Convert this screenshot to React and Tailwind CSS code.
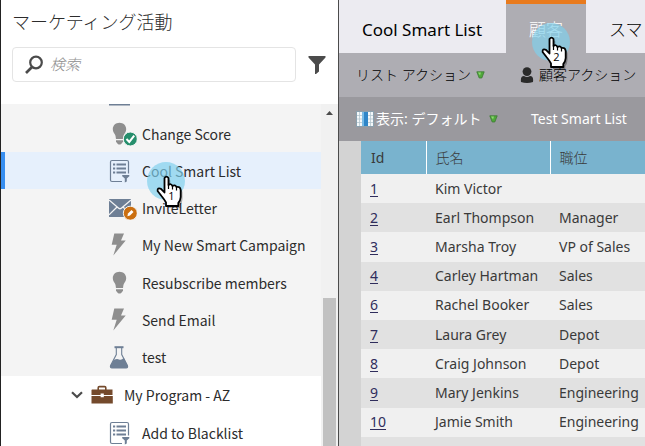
import React from "react";

const JP_SANS = "font-['Noto_Sans','Noto_Sans_CJK_JP',sans-serif]";

function SearchIcon() {
  return (
    <svg width="20" height="20" viewBox="0 0 20 20" fill="none" stroke="#4b4b4b" aria-hidden="true">
      <circle cx="12" cy="7.5" r="5.8" strokeWidth="2.2" />
      <path d="M8 12 L2 18" strokeWidth="2.6" />
    </svg>
  );
}

function FilterIcon() {
  return (
    <svg width="18" height="20" viewBox="0 0 18 20" fill="#4b4b4b" aria-hidden="true">
      <path d="M.5 1 H17.5 V2.5 L11 9.5 V16.5 L8 19 H7 V9.5 L.5 2.5Z" />
    </svg>
  );
}

function BulbShape() {
  return (
    <g fill="#8e8e8e">
      <path d="M10.5 .8 C6.6 .8 3.8 3.6 3.8 7.2 C3.8 9.9 5.4 11.4 6.2 13 C6.8 14.2 6.7 15.8 7 17 H14 C14.3 15.8 14.2 14.2 14.8 13 C15.6 11.4 17.2 9.9 17.2 7.2 C17.2 3.6 14.4 .8 10.5 .8Z" />
      <path d="M7 18.2 H14 V19.8 L12.2 22 Q10.5 23.2 8.8 22 L7 19.8Z" />
    </g>
  );
}

const shapes = {
  bulb: <BulbShape />,
  bulbActive: (
    <>
      <BulbShape />
      <circle cx="21.3" cy="17" r="7" fill="#268e6c" stroke="#f4f4f4" strokeWidth="1" />
      <path d="M17.5 17 L20.3 19.9 L25.2 13.6" fill="none" stroke="#fff" strokeWidth="2" />
    </>
  ),
  list: (
    <>
      <path d="M13 22.5 H3 Q1.5 22.5 1.5 21 V3 Q1.5 1.5 3 1.5 H18 Q19.5 1.5 19.5 3 V14.5" fill="none" stroke="#6e7f95" strokeWidth="1.2" />
      <path d="M4 5.5 H6.2 M4 9.5 H6.2 M4 13.5 H6.2 M7.5 5.5 H17 M7.5 9.5 H17 M7.5 13.5 H17" stroke="#6e7f95" strokeWidth="1.8" />
      <path d="M13.2 16 H20.3 V17.2 L17.8 19.6 V22.5 L15.8 23.6 V19.6 L13.2 17.2Z" fill="#6e7f95" />
    </>
  ),
  mail: (
    <>
      <rect x="0" y="3" width="22" height="18" fill="#6e7f95" />
      <path d="M0 4 L10 12.4 Q11 13.1 12 12.4 L22 4 M0 18.8 L7.8 11.2 M14.2 11.2 L22 18.8" fill="none" stroke="#f4f4f4" strokeWidth="1.3" />
      <circle cx="21.3" cy="17.2" r="7" fill="#cb6f10" stroke="#f4f4f4" strokeWidth="1" />
      <path d="M18.4 20.2 L19 17.6 L22.5 14.1 L24.5 16 L21 19.6Z" fill="#fff" />
    </>
  ),
  bolt: <path d="M5.3 .5 H15 L12 7.5 H16.7 L4.3 22.4 L7.7 11.8 H2.7Z" fill="#8e8e8e" />,
  flask: (
    <>
      <path d="M5.5 2.2 H14.5" stroke="#6e7f95" strokeWidth="2" />
      <path d="M7.3 3 V9.5 L1.6 20.5 Q.8 22.9 3 22.9 H17.2 Q19.2 22.9 18.4 20.5 L12.7 9.5 V3" fill="none" stroke="#6e7f95" strokeWidth="1.1" />
      <path d="M4.6 15 Q8 13.2 10 14.4 Q12.5 15.6 14.8 12.8 L18.6 20.5 Q19.4 23 17 23 H3 Q.6 23 1.4 20.5Z" fill="#6e7f95" />
    </>
  ),
  sheet: <path d="M0 20 H21 V22.5 H0Z" fill="#6e7f95" />,
  briefcase: (
    <>
      <path d="M7.2 7 V4.8 Q7.2 3.6 8.4 3.6 H13.6 Q14.8 3.6 14.8 4.8 V7" fill="none" stroke="#744a2c" strokeWidth="1.6" />
      <path d="M1 6.5 H21.5 V12 H12.8 V10.6 H9.6 V12 H.5 V7Z M.5 13 H9.6 V14.2 H12.8 V13 H21.8 V20.5 H.5Z" fill="#744a2c" />
    </>
  ),
};

function TreeIcon({ name }) {
  return (
    <svg className="shrink-0" width="28" height="24" viewBox="0 0 28 24" aria-hidden="true">
      {shapes[name]}
    </svg>
  );
}

const items = [
  { icon: "list", label: "Cool Smart List", selected: true },
  { icon: "mail", label: "InviteLetter" },
  { icon: "bolt", label: "My New Smart Campaign" },
  { icon: "bulb", label: "Resubscribe members" },
  { icon: "bolt", label: "Send Email" },
  { icon: "flask", label: "test" },
];

function TreeItem({ icon, label, selected }) {
  return (
    <button
      type="button"
      className={`flex w-full items-center gap-[5px] border-l-4 pl-[104px] text-left whitespace-nowrap ${
        selected ? "border-[#378ef0] bg-[#e6f0fc]" : "border-transparent"
      }`}
    >
      <TreeIcon name={icon} />
      <span>{label}</span>
    </button>
  );
}

function Pointer({ step, className }) {
  return (
    <div className={`pointer-events-none absolute ${className}`}>
      <svg width="44" height="54" viewBox="0 0 44 54" aria-hidden="true">
        <circle cx="19" cy="19" r="19" fill="#7fd0ec" fillOpacity="0.68" />
        <g transform="translate(9 13)">
          <path d="M9 3.5 Q10.5 1 12.3 3.5 V11 Q15 9 16.5 11.8 Q19 10 20.5 12.8 Q24 11.5 24.5 15.5 V22 Q24.3 26 22.3 28 V31 H10 V27.5 Q8 24 5.5 21 L1.8 16.5 Q1.5 12.5 5 14.5 L8.6 18Z" transform="translate(2 2)" fill="#000" fillOpacity="0.3" />
          <path d="M8.5 3 Q10.5 .2 12.5 3 V10 Q15 8 16.5 11 Q19 9.3 20.5 12 Q24 11 24.7 15 V22 Q24.3 26 22.3 28 V31 H10 V27.5 Q8 24 5.5 21 L1.6 16 Q1.3 12.3 5 13.8 L8.5 17.5Z" fill="#fff" stroke="#000" strokeWidth="1.8" strokeLinejoin="round" />
          <path d="M12.5 9 V14 M16.5 11 V14.5 M20.5 12 V15.5" stroke="#000" strokeWidth="1.2" />
          <text x="15.5" y="25" textAnchor="middle" fontSize="11" fontFamily="Open Sans" fill="#000">
            {step}
          </text>
        </g>
      </svg>
    </div>
  );
}

function Sidebar() {
  return (
    <aside className="flex w-[339px] shrink-0 flex-col border-x border-l-[#222] border-r-[#4b4b4b] bg-white font-['Noto_Sans_CJK_JP',sans-serif] text-[#2c2c2c]">
      <h1 className="pt-[9px] pl-[11px] text-lg leading-6 font-light">マーケティング活動</h1>
      <div className="mt-3.5 flex items-center pl-[11px]">
        <label className="flex h-[35px] w-[284px] items-center gap-1.5 rounded border border-[#e4e4e4] pl-[11px]">
          <SearchIcon />
          <input
            type="search"
            aria-label="検索"
            placeholder="検索"
            className="min-w-0 flex-1 text-[15px] font-light italic outline-none placeholder:text-[#8e8e8e] placeholder:italic"
          />
        </label>
        <button type="button" aria-label="フィルター" className="ml-3">
          <FilterIcon />
        </button>
      </div>
      <div className="mt-[22px] flex min-h-0 flex-1 overflow-hidden">
        <nav className="min-w-0 flex-1 text-sm leading-6">
          <div className="bg-[#f4f4f4]">
            <div className="flex h-[11px] items-end overflow-hidden pb-[8px] pl-[108px]">
              <TreeIcon name="sheet" />
            </div>
            <div className="grid h-[37px]">
              <TreeItem icon="bulbActive" label="Change Score" />
            </div>
            <div className="grid h-56 grid-rows-6">
              {items.map((item) => (
                <TreeItem key={item.label} {...item} />
              ))}
            </div>
          </div>
          <button type="button" className="flex h-[38px] w-full items-center pl-[70px] text-left">
            <svg width="12" height="8" viewBox="0 0 12 8" fill="none" stroke="#4b4b4b" strokeWidth="2.2" aria-hidden="true">
              <path d="M1 1.2 L6 6 L11 1.2" />
            </svg>
            <span className="ml-2 flex items-center gap-[5px]">
              <TreeIcon name="briefcase" />
              <span>My Program - AZ</span>
            </span>
          </button>
          <div className="grid h-[37px]">
            <TreeItem icon="list" label="Add to Blacklist" />
          </div>
        </nav>
        <div className="flex w-[17px] flex-col items-center bg-[#f1f1f1]">
          <svg className="mt-[7px]" width="7" height="4" viewBox="0 0 7 4" aria-hidden="true">
            <path d="M0 4 L3.5 0 L7 4Z" fill="#4b4b4b" />
          </svg>
          <div className="mt-[183px] w-[13px] flex-1 bg-[#c1c1c1]" />
        </div>
      </div>
    </aside>
  );
}

function Caret() {
  return (
    <svg width="9" height="8" viewBox="0 0 9 8" aria-hidden="true">
      <path d="M.8 .8 H8.2 L5.8 7 H3.2Z" fill="#4fa83a" stroke="#3d7a35" strokeWidth=".8" />
      <path d="M2 1.5 H5 L4 4.5Z" fill="#8fd873" />
    </svg>
  );
}

function ColumnsIcon() {
  return (
    <svg width="18" height="16" viewBox="0 0 18 16" aria-hidden="true">
      <rect x=".5" y=".5" width="17" height="15" fill="#f4f8fa" stroke="#8aa0ae" />
      <path d="M1 4.5 H17 M1 8 H17 M1 11.5 H17 M3.5 1 V15 M14.5 1 V15" stroke="#b4c5cf" strokeWidth=".8" />
      <rect x="6" y="1" width="6" height="14" fill="#2f86c8" />
      <rect x="6" y="1" width="2" height="14" fill="#79bbe6" />
    </svg>
  );
}

function PersonIcon() {
  return (
    <svg width="14" height="16" viewBox="0 0 14 16" fill="#2a2a2a" aria-hidden="true">
      <circle cx="7" cy="4.6" r="4.4" />
      <path d="M1 15 Q.2 9 4 9 Q7 11 10 9 Q13.8 9 13 15 Q7 16.8 1 15Z" />
    </svg>
  );
}

const people = [
  ["1", "Kim Victor", ""],
  ["2", "Earl Thompson", "Manager"],
  ["3", "Marsha Troy", "VP of Sales"],
  ["4", "Carley Hartman", "Sales"],
  ["6", "Rachel Booker", "Sales"],
  ["7", "Laura Grey", "Depot"],
  ["8", "Craig Johnson", "Depot"],
  ["9", "Mary Jenkins", "Engineering"],
  ["10", "Jamie Smith", "Engineering"],
  ["", "", ""],
];

function PeopleTable() {
  return (
    <div className="ml-[22px]">
      <table className="h-[325px] w-full min-w-[280px] table-fixed border-collapse text-left text-sm leading-5 whitespace-nowrap text-[#3a3a3a]">
        <colgroup>
          <col className="w-[65px]" />
          <col className="w-[124px]" />
          <col />
        </colgroup>
        <thead>
          <tr className="h-[33px] bg-[#79b3ce]">
            <th scope="col" className="pl-2.5 font-normal">Id</th>
            <th scope="col" className="border-l border-white pl-[9px] font-light">氏名</th>
            <th scope="col" className="border-l border-white pl-[9px] font-light">職位</th>
          </tr>
        </thead>
        <tbody>
          {people.map(([id, name, title]) => (
            <tr key={id} className="h-[29px] odd:bg-[#f0f0f0] even:bg-[#e1e1e1]">
              <td className="pl-[9px]">
                {id && (
                  <a href={`#person-${id}`} className="text-[#2f2d5c] underline underline-offset-2">
                    {id}
                  </a>
                )}
              </td>
              <td className="pl-[9px]">{name}</td>
              <td className="pl-[9px]">{title}</td>
            </tr>
          ))}
        </tbody>
      </table>
    </div>
  );
}

function Workspace() {
  return (
    <main className={`flex min-w-0 flex-1 flex-col overflow-hidden bg-[#d3d3d3] whitespace-nowrap ${JP_SANS}`}>
      <div className="flex h-[53px] shrink-0 bg-[#ecebf1] text-[17px] text-black">
        <button type="button" className="w-[167px] shrink-0 pt-1.5 pl-[23px] text-left">Cool Smart List</button>
        <button type="button" className="w-20 shrink-0 border-t-4 border-[#e87a1d] bg-[#aeadb3] pt-0.5 font-light text-white">
          顧客
        </button>
        <button type="button" className="shrink-0 pt-1.5 pl-[23px] font-light">スマ</button>
      </div>
      <div className="flex h-11 shrink-0 items-center bg-[#aeadb3] pl-[17px] text-sm text-black">
        <button type="button" className="flex w-[164px] shrink-0 items-center gap-[5px] font-light">
          リスト アクション
          <Caret />
        </button>
        <button type="button" className="flex items-center gap-[5px] font-light">
          <PersonIcon />
          顧客アクション
        </button>
      </div>
      <div className="flex h-11 shrink-0 items-center bg-[#9a999e] pl-[17px] text-sm text-white">
        <button type="button" className="flex w-[175px] shrink-0 items-center">
          <ColumnsIcon />
          <span className="mr-2 ml-0.5">表示: デフォルト</span>
          <Caret />
        </button>
        <span>Test Smart List</span>
      </div>
      <PeopleTable />
    </main>
  );
}

export default function App() {
  return (
    <div className="relative flex h-screen overflow-hidden">
      <Sidebar />
      <Workspace />
      <Pointer step="1" className="top-[162px] left-[147px]" />
      <Pointer step="2" className="top-[23px] left-[532px]" />
    </div>
  );
}
